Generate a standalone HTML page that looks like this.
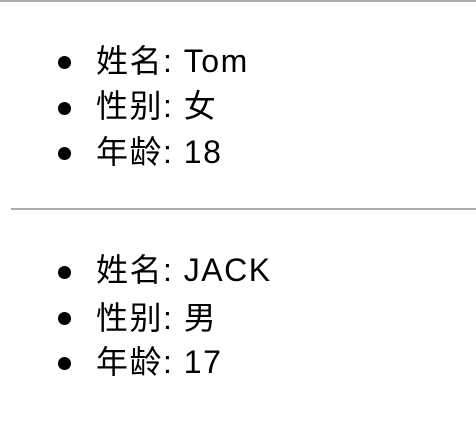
<html><head><style>
body{margin:0;width:476px;height:438px;background:#fff;position:relative;overflow:hidden;font-family:"Liberation Sans","Noto Sans CJK SC",sans-serif;color:#000}
.l{position:absolute;left:96px;font-size:32px;line-height:46px;white-space:nowrap;letter-spacing:1.5px}
.b{position:absolute;left:58px;width:13px;height:13px;border-radius:50%;background:#000}
.hr{position:absolute;height:2px;background:#aaa}
</style></head><body>
<div class="hr" style="left:0;top:0;width:476px"></div>
<div class="b" style="top:56px"></div><div class="l" style="top:38px">姓名: Tom</div>
<div class="b" style="top:102px"></div><div class="l" style="top:83px">性别: 女</div>
<div class="b" style="top:147px"></div><div class="l" style="top:129px">年龄: 18</div>
<div class="hr" style="left:11px;top:208px;width:465px"></div>
<div class="b" style="top:266px"></div><div class="l" style="top:247px">姓名: JACK</div>
<div class="b" style="top:312px"></div><div class="l" style="top:295px">性别: 男</div>
<div class="b" style="top:357px"></div><div class="l" style="top:339px">年龄: 17</div>
</body></html>
